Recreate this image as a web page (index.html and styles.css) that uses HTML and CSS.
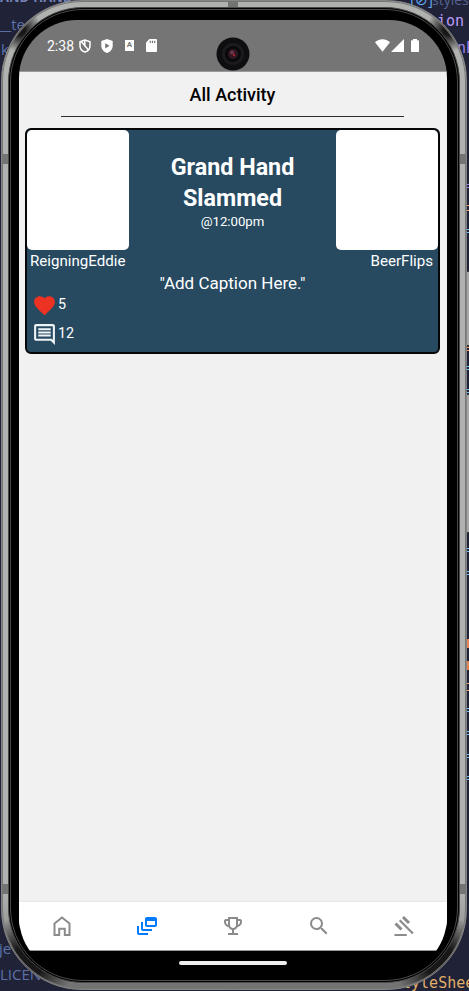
FILE: index.html
```html
<!DOCTYPE html>
<html lang="en">
<head>
<meta charset="utf-8">
<title>All Activity</title>
<link rel="stylesheet" href="styles.css">
</head>
<body>
<div class="editor">
  <span class="code code-heading">AND-HAND</span>
  <span class="code code-tests">__te</span>
  <span class="code code-file">.k</span>
  <span class="code code-brackets">[⊘]</span>
  <span class="code code-styles">styles</span>
  <span class="code code-function">ion</span>
  <span class="code code-name">nP</span>
  <span class="code code-project">je</span>
  <span class="code code-license">LICEN</span>
  <span class="code code-sheet">StyleSheet</span>
  <i class="mark purple m1"></i><i class="mark orange m2"></i><i class="mark m3"></i>
  <i class="mark orange m4"></i><i class="mark m5"></i><i class="mark m6"></i>
  <i class="mark m7"></i><i class="mark m8"></i><i class="mark glyph m9"></i>
  <i class="mark glyph m10"></i><i class="mark orange m11"></i><i class="mark m12"></i>
  <i class="mark m13"></i><i class="mark m14"></i><i class="mark m15"></i>
</div>
<i class="side-key power"></i>
<i class="side-key volume"></i>
<div class="phone">
  <i class="band left upper"></i><i class="band left lower"></i>
  <i class="band right upper"></i><i class="band right lower"></i>
  <i class="band top"></i><i class="band bottom"></i>
  <div class="bezel">
    <div class="screen">
      <header class="status">
        <span class="time">2:38</span>
        <svg class="s-shield" viewBox="0 0 12 14"><path d="M6 1 1 2.8v4C1 9.800 3 12.200 6 13c3-.8 5-3.200 5-6.200v-4z" fill="none" stroke="#fff" stroke-width="1.500"/><path d="M2.200 2.500 9.500 11M5.800 1v5.500" stroke="#fff" stroke-width="1.500"/></svg>
        <svg class="s-play" viewBox="0 0 12 14"><path d="M6 0 .3 2v4.800C.3 10.200 2.700 13 6 14c3.300-1 5.700-3.800 5.700-7.200V2z" fill="#fff"/><path d="M4.200 4.200v5.200L8.500 6.800z" fill="#757575"/></svg>
        <span class="s-letter">A</span>
        <svg class="s-card" viewBox="0 0 11 13"><path d="M3.500 0H10a1 1 0 0 1 1 1v11a1 1 0 0 1-1 1H1a1 1 0 0 1-1-1V3.500z" fill="#fff"/><path d="M4.300 1.700v2.300M6.500 1.700v2.300M8.700 1.700v2.300" stroke="#757575" stroke-width="1.200"/></svg>
        <span class="spacer"></span>
        <svg class="s-wifi" viewBox="0 0 15 13"><path d="M0 3.200C4.300-.8 10.700-.8 15 3.200L7.500 12.800z" fill="#fff"/></svg>
        <svg class="s-signal" viewBox="0 0 13 13"><path d="M13 0v13H0z" fill="#fff"/></svg>
        <svg class="s-battery" viewBox="0 0 8 13"><path d="M2 0h4v1.200h1.200a.8.8 0 0 1 .8.800v10.200a.8.8 0 0 1-.8.800H.8a.8.8 0 0 1-.8-.8V2a.8.8 0 0 1 .8-.8H2z" fill="#fff"/></svg>
      </header>
      <main class="page">
        <h1>All Activity</h1>
        <article class="card">
          <div class="versus">
            <div class="photo"></div>
            <div class="summary"><h2>Grand Hand Slammed</h2><time>@12:00pm</time></div>
            <div class="photo"></div>
          </div>
          <div class="players"><span>ReigningEddie</span><span>BeerFlips</span></div>
          <p class="caption">"Add Caption Here."</p>
          <div class="reaction likes"><svg viewBox="0 0 24 24"><path fill="#eb3223" d="m12 21.350-1.450-1.320C5.400 15.360 2 12.280 2 8.500 2 5.420 4.420 3 7.500 3c1.740 0 3.410.81 4.500 2.090C13.090 3.810 14.760 3 16.500 3 19.580 3 22 5.420 22 8.500c0 3.780-3.400 6.860-8.550 11.540z"/></svg><span>5</span></div>
          <div class="reaction comments"><svg viewBox="0 0 24 24"><path fill="#eef3f5" d="M21.990 4c0-1.100-.89-2-1.990-2H4c-1.100 0-2 .9-2 2v12c0 1.100.9 2 2 2h14l4 4zM20 4v13.170L18.830 16H4V4zM6 12h12v2H6zm0-3h12v2H6zm0-3h12v2H6z"/></svg><span>12</span></div>
        </article>
      </main>
      <nav class="tabs">
        <a><svg viewBox="0 0 24 24"><path fill="none" stroke="#8b8b8b" stroke-width="2" d="M4.500 9.500 12 3.500l7.500 6V21h-4.700v-6.200H9.200V21H4.500z"/></svg></a>
        <a><svg viewBox="0 0 24 24"><path fill="#007aff" d="M8 8H6v7c0 1.100.9 2 2 2h9v-2H8zM20 3h-8c-1.100 0-2 .9-2 2v6c0 1.100.9 2 2 2h8c1.100 0 2-.9 2-2V5c0-1.100-.9-2-2-2zm0 8h-8V7h8zM4 12H2v7c0 1.100.9 2 2 2h9v-2H4z"/></svg></a>
        <a><svg viewBox="0 0 24 24"><path fill="#8b8b8b" d="M19 5h-2V3H7v2H5c-1.100 0-2 .9-2 2v1c0 2.550 1.920 4.630 4.390 4.940.63 1.500 1.980 2.630 3.610 2.960V19H7v2h10v-2h-4v-3.100c1.630-.33 2.980-1.460 3.610-2.960C19.080 12.630 21 10.550 21 8V7c0-1.100-.9-2-2-2zM5 8V7h2v3.820C5.840 10.400 5 9.300 5 8zm7 6c-1.650 0-3-1.350-3-3V5h6v6c0 1.650-1.350 3-3 3zm7-6c0 1.300-.84 2.400-2 2.820V7h2z"/></svg></a>
        <a><svg viewBox="0 0 24 24"><path fill="#8b8b8b" d="M15.500 14h-.79l-.28-.27A6.470 6.470 0 0 0 16 9.500 6.500 6.500 0 1 0 9.500 16c1.610 0 3.090-.59 4.230-1.570l.27.28v.79l5 4.990L20.490 19zm-6 0C7.010 14 5 11.990 5 9.500S7.010 5 9.500 5 14 7.010 14 9.500 11.990 14 9.500 14z"/></svg></a>
        <a><svg viewBox="0 0 24 24"><path fill="none" stroke="#8b8b8b" stroke-width="2.200" d="M2.500 21h12.300M7.700 6.300 20.900 19.600"/><path fill="none" stroke="#8b8b8b" stroke-width="3" d="m3.500 9.500 6 6M11 3l6 6"/></svg></a>
      </nav>
      <footer class="gesture"><i></i></footer>
    </div>
  </div>
  <svg class="camera" viewBox="0 0 34 34"><circle cx="17" cy="17" r="16.500" fill="#0e0e10"/><circle cx="17" cy="17" r="11" fill="#1b1b1d"/><circle cx="17" cy="17" r="8" fill="#09090b"/><circle cx="17" cy="17" r="5" fill="#301822"/><circle cx="16" cy="15.500" r="2" fill="#69354a"/><circle cx="18" cy="18" r="1.200" fill="#a32136"/></svg>
</div>
</body>
</html>
```
FILE: styles.css
```css
* { box-sizing: border-box; }
body {
  margin: 0;
  width: 469px;
  height: 991px;
  position: relative;
  overflow: hidden;
  background: #202237;
  font-family: Roboto, sans-serif;
}
h1, h2, p { margin: 0; }
svg { display: block; flex: none; }

/* Editor visible behind the device */
.editor { position: absolute; inset: 0; overflow: hidden; }
.code { position: absolute; white-space: nowrap; font: 15px/20px "Open Sans", sans-serif; color: #5d71a8; }
.code-heading { left: 0; top: -13px; font-weight: 700; font-size: 13px; color: #7583b5; }
.code-tests { left: -2px; top: 14px; }
.code-file { left: -3px; top: 39px; }
.code-brackets { left: 410px; top: -11px; color: #62a8ed; }
.code-styles { left: 432px; top: -10px; font-size: 14px; color: #56628f; }
.code-function, .code-name, .code-sheet { font-family: "DejaVu Sans Mono", monospace; }
.code-function { left: 437px; top: 11px; color: #bb9af7; }
.code-name { left: 457px; top: 38px; color: #9b86ed; }
.code-project { left: -1px; top: 938px; }
.code-license { left: 0; top: 964px; }
.code-sheet { left: 393px; top: 973px; color: #e0af68; }
.mark { position: absolute; left: 466px; width: 3px; height: 4px; border: solid #6ec2f0; border-width: 1px 0; }
.purple { border-color: #9d7cf0; }
.orange { border-color: #ff955f; }
.glyph { border: 0; background: #e98253; }
.m1 { top: 184px; }
.m2 { top: 205px; height: 6px; }
.m3 { top: 229px; }
.m4 { top: 347px; }
.m5 { top: 366px; }
.m6 { top: 389px; }
.m7 { top: 548px; }
.m8 { top: 571px; }
.m9 { top: 639px; height: 9px; }
.m10 { top: 661px; height: 9px; }
.m11 { top: 683px; height: 8px; }
.m12 { top: 708px; }
.m13 { top: 731px; }
.m14 { top: 754px; }
.m15 { top: 776px; }

/* Device */
.side-key { position: absolute; left: 464px; width: 5px; background: #a7a7a7; border: 1px solid #333; border-width: 2px 0; border-radius: 2px; }
.power { top: 270px; height: 77px; }
.volume { top: 393px; height: 141px; }
.phone {
  position: relative;
  width: 466px;
  height: 990px;
  margin-left: 1px;
  padding: 6px;
  border: 1px solid #858585;
  border-radius: 81px;
  background:
    radial-gradient(circle at 18px 29px, #181818 5px, transparent 22px),
    radial-gradient(circle at 446px 29px, #181818 5px, transparent 22px),
    radial-gradient(circle at 24px 962px, #181818 16px, transparent 48px),
    radial-gradient(circle at 440px 962px, #181818 16px, transparent 48px),
    linear-gradient(#b0b2af, #b0b2af 90%, #717171);
  box-shadow: inset 0 0 0 1px #777;
}
.band { position: absolute; background: #727572; }
.left { left: 0; width: 6px; height: 10px; }
.right { right: 0; width: 6px; height: 10px; }
.upper { top: 153px; }
.lower { top: 883px; }
.top, .bottom { left: 226px; width: 10px; height: 6px; }
.top { top: 0; }
.bottom { bottom: 0; }
.bezel {
  position: relative;
  height: 100%;
  padding: 10px 10px 6px 8px;
  border: 3px double #4a4a4a;
  border-radius: 75px;
  background: #000;
}
.screen {
  height: 955px;
  display: flex;
  flex-direction: column;
  overflow: hidden;
  border-radius: 58px;
  background: #000;
}
.status {
  flex: none;
  height: 52px;
  display: flex;
  align-items: center;
  padding: 0 28px;
  background: #757575;
  border-bottom: 1px solid #9a9a9a;
  color: #fff;
}
.time { width: 32px; font-size: 14px; line-height: 16px; }
.s-shield { width: 12px; height: 14px; }
.s-play { width: 12px; height: 14px; margin-left: 10px; }
.s-letter { width: 9px; height: 11px; margin-left: 12px; background: #fff; color: #757575; font-size: 8px; font-weight: 700; line-height: 10px; text-align: center; }
.s-card { width: 11px; height: 13px; margin-left: 12px; }
.spacer { flex: 1; }
.s-wifi { width: 15px; height: 13px; }
.s-signal { width: 13px; height: 13px; margin-left: 1px; }
.s-battery { width: 8px; height: 13px; margin-left: 7px; }
.page { flex: none; height: 830px; padding: 11px 7px 0 6px; background: #f1f1f1; }
h1 {
  height: 34px;
  margin: 0 36px 11px;
  padding-bottom: 10px;
  border-bottom: 1px solid #2d2d2d;
  font-size: 18px;
  line-height: 23px;
  font-weight: 500;
  text-align: center;
  color: #000;
}
.card { height: 226px; border: 2px solid #050607; border-radius: 6px; background: #274a61; color: #fff; }
.versus { display: flex; justify-content: space-between; height: 120px; }
.photo { width: 102px; height: 120px; border-radius: 5px; background: #fff; }
.summary { flex: 1; padding-top: 22px; text-align: center; }
h2 { width: 140px; margin: 0 auto; font-size: 23.3px; line-height: 31px; font-weight: 700; }
time { display: block; margin-top: -1px; font-size: 13.2px; line-height: 18px; }
.players { display: flex; justify-content: space-between; padding: 0 5px 0 3px; font-size: 15.1px; line-height: 23px; }
.caption { font-size: 17px; line-height: 21px; text-align: center; }
.reaction { display: flex; align-items: center; padding-left: 5px; font-size: 14.300px; }
.reaction svg { width: 25px; height: 25px; }
.reaction span { margin-left: 1px; position: relative; top: -1px; }
.likes { height: 22px; }
.comments { height: 36px; }
.tabs { flex: none; height: 48px; display: grid; grid-template-columns: repeat(5, 1fr); align-items: center; background: #fff; box-shadow: 0 -1px 1px #e8e8e8; }
.tabs a { display: flex; justify-content: center; }
.tabs svg { width: 24px; height: 24px; }
.gesture { flex: none; height: 25px; padding-top: 10px; background: #000; border-top: 1px solid #999; }
.gesture i { display: block; width: 108px; height: 4px; margin: 0 auto; border-radius: 2px; background: #eee; }
.camera { position: absolute; left: 213.5px; top: 35.5px; width: 34px; height: 34px; }
```
